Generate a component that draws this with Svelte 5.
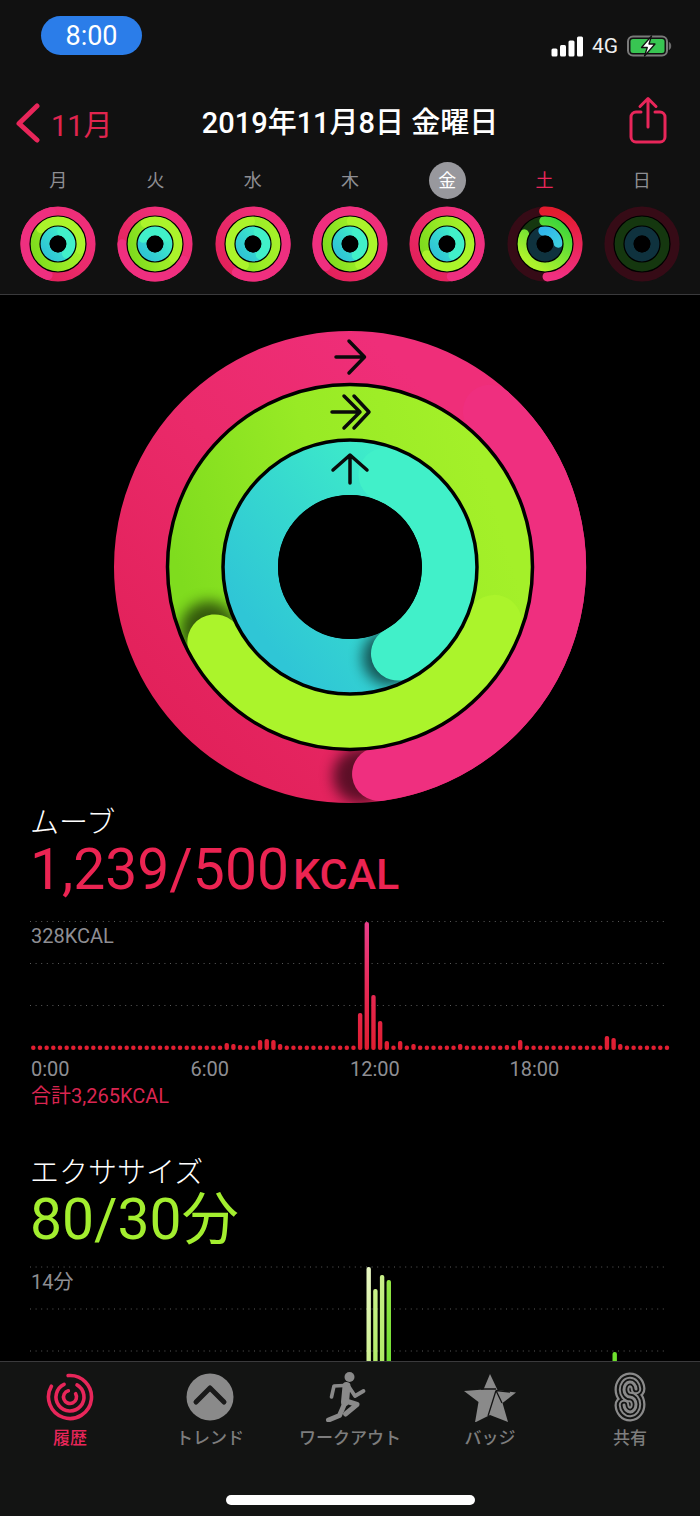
<script>
  // angles are clockwise from 12 o'clock
  function arc(r, a0, a1) {
    const rad = (a) => (a * Math.PI) / 180;
    const x0 = r * Math.sin(rad(a0));
    const y0 = -r * Math.cos(rad(a0));
    const x1 = r * Math.sin(rad(a1));
    const y1 = -r * Math.cos(rad(a1));
    const large = a1 - a0 > 180 ? 1 : 0;
    return `M${x0.toFixed(2)} ${y0.toFixed(2)}A${r} ${r} 0 ${large} 1 ${x1.toFixed(2)} ${y1.toFixed(2)}`;
  }

  function polar(r, a) {
    const t = (a * Math.PI) / 180;
    return { x: r * Math.sin(t), y: -r * Math.cos(t) };
  }

  const days = [
    { label: '月', heads: [348, 103, 138] },
    { label: '火', heads: [270, 126, 57] },
    { label: '水', heads: [210, 353, 145] },
    { label: '木', heads: [17, 154, 150] },
    { label: '金', heads: [172, 241, 151], current: true },
    { label: '土', weekend: true, partial: true },
    { label: '日', empty: true }
  ];

  const mainRings = [
    { r: 209, w: 54, inner: 182, outer: 236, head: 172, base: 'url(#baseMove)', top: '#ef2f7f', id: 'clipMove' },
    { r: 154.5, w: 55, inner: 127, outer: 182, head: 241, base: 'url(#baseExercise)', top: '#abf42b', id: 'clipExercise' },
    { r: 99, w: 54, inner: 72, outer: 126, head: 151, base: 'url(#baseStand)', top: '#41f0c9', id: 'clipStand' }
  ];

  const moveSpikes = {
    29: 7, 30: 6, 31: 5, 34: 10, 35: 11, 36: 10, 37: 6,
    49: 37, 50: 128, 51: 55, 52: 29, 53: 9, 55: 9, 57: 6,
    64: 6, 71: 5, 73: 10, 86: 14, 87: 12, 88: 6
  };
  const moveBars = Array.from({ length: 96 }, (_, k) => ({
    x: 3.3 + 6.67 * k - 2.2,
    h: moveSpikes[k] || 4.5
  }));

  const exerciseBars = [
    { x: 336.5, top: 1, fill: 'url(#exA)' },
    { x: 343.2, top: 23, fill: 'url(#exB)' },
    { x: 349.9, top: 9, fill: 'url(#exB)' },
    { x: 356.6, top: 14, fill: 'url(#exC)' },
    { x: 582.5, top: 86, fill: '#6fe02e' }
  ];

  const times = ['0:00', '6:00', '12:00', '18:00'];
</script>

{#snippet miniRing(day)}
  <svg class="mini" viewBox="-38 -38 76 76">
    <circle r="28.7" fill="#000" />
    {#if day.heads}
      <circle r="32.8" fill="none" stroke-width="9.5" stroke="url(#baseMove)" />
      <circle r="23" fill="none" stroke-width="9.8" stroke="url(#baseExercise)" />
      <circle r="13.2" fill="none" stroke-width="9.6" stroke="url(#baseStand)" />
      <path d={arc(32.8, day.heads[0] - 150, day.heads[0])} class="cap" stroke-width="9.5" stroke="#ef2f7f" />
      <path d={arc(23, day.heads[1] - 150, day.heads[1])} class="cap" stroke-width="9.8" stroke="#abf42b" />
      <path d={arc(13.2, day.heads[2] - 120, day.heads[2])} class="cap" stroke-width="9.6" stroke="#41f0c9" />
    {:else}
      <circle r="32.8" fill="none" stroke-width="9.5" stroke="#360b16" />
      <circle r="23" fill="none" stroke-width="9.8" stroke="#15370f" />
      <circle r="13.2" fill="none" stroke-width="9.6" stroke="#0f323e" />
    {/if}
    {#if day.partial}
      <path d={arc(32.8, -2, 176)} class="cap" stroke-width="9.5" stroke="url(#partMove)" />
      <path d={arc(23, -2, 295)} class="cap" stroke-width="9.8" stroke="url(#partExercise)" />
      <path d={arc(13.2, -8, 85)} class="cap" stroke-width="9.6" stroke="url(#partStand)" />
    {/if}
    <circle r="28" fill="none" stroke="#000" stroke-width="1.2" />
    <circle r="18" fill="none" stroke="#000" stroke-width="1.2" />
    <circle r="8.4" fill="#000" />
  </svg>
{/snippet}

<div class="phone">
  <svg class="defs" width="0" height="0">
    <defs>
      <linearGradient id="baseMove" x1="0.1" y1="0.9" x2="0.8" y2="0.2">
        <stop offset="0" stop-color="#e2215a" />
        <stop offset="0.55" stop-color="#ea2a6a" />
        <stop offset="1" stop-color="#ef2e79" />
      </linearGradient>
      <linearGradient id="baseExercise" x1="0" y1="0.7" x2="1" y2="0.4">
        <stop offset="0" stop-color="#7fdc1e" />
        <stop offset="0.5" stop-color="#98ea25" />
        <stop offset="1" stop-color="#a4f029" />
      </linearGradient>
      <linearGradient id="baseStand" x1="0.1" y1="0.9" x2="0.9" y2="0.25">
        <stop offset="0" stop-color="#2fc6d6" />
        <stop offset="0.5" stop-color="#36d8cf" />
        <stop offset="1" stop-color="#3eecc9" />
      </linearGradient>
      <linearGradient id="partMove" x1="0" y1="0" x2="0" y2="1">
        <stop offset="0" stop-color="#e31b2e" />
        <stop offset="1" stop-color="#f02f80" />
      </linearGradient>
      <linearGradient id="partExercise" x1="0.8" y1="0" x2="0.2" y2="0.9">
        <stop offset="0" stop-color="#3dd53b" />
        <stop offset="1" stop-color="#adf22c" />
      </linearGradient>
      <linearGradient id="partStand" x1="0" y1="0" x2="1" y2="1">
        <stop offset="0" stop-color="#31b6ec" />
        <stop offset="1" stop-color="#3ccde0" />
      </linearGradient>
      <filter id="soft" x="-50%" y="-50%" width="200%" height="200%">
        <feGaussianBlur stdDeviation="7" />
      </filter>
    </defs>
  </svg>

  <header>
    <div class="status">
      <div class="time">8:00</div>
      <div class="indicators">
        <svg class="signal" width="33" height="21" viewBox="0 0 33 21">
          <rect x="0.5" y="12.5" width="6" height="8" rx="1.5" />
          <rect x="9" y="9" width="6" height="11.5" rx="1.5" />
          <rect x="17.5" y="4.5" width="6" height="16" rx="1.5" />
          <rect x="26" y="0.5" width="6" height="20" rx="1.5" />
        </svg>
        <span class="net">4G</span>
        <svg class="battery" width="46" height="22" viewBox="0 0 46 22">
          <rect x="1" y="1.5" width="39" height="19" rx="5" fill="none" stroke="#7a7a7a" stroke-width="2" />
          <rect x="3.5" y="4" width="34" height="14" rx="2.5" fill="#38c552" />
          <path d="M41.8 7v8c1.6-.4 2.4-2 2.4-4s-.8-3.600-2.400-4z" fill="#6a6a6a" />
          <path d="M24.500 1 14.500 12.500h5.800L17.500 21l10.500-12h-6z" fill="#fff" stroke="#111" stroke-width="1.300" stroke-linejoin="round" />
        </svg>
      </div>
    </div>

    <div class="nav">
      <div class="back">
        <svg width="24" height="40" viewBox="0 0 24 40">
          <path d="M21 3 3 20.500 21 37" fill="none" stroke="#e8265a" stroke-width="5" stroke-linecap="round" stroke-linejoin="round" />
        </svg>
        <span>11月</span>
      </div>
      <h1>2019年11月8日 金曜日</h1>
      <svg class="share" width="38" height="48" viewBox="0 0 38 48">
        <path d="M12 16H7a5 5 0 0 0-5 5v20a5 5 0 0 0 5 5h24a5 5 0 0 0 5-5V21a5 5 0 0 0-5-5h-5M19 31V3M11 10.500 19 2.500l8 8" fill="none" stroke="#e8265a" stroke-width="3" stroke-linecap="round" stroke-linejoin="round" />
      </svg>
    </div>

    <div class="week">
      {#each days as day}
        <div class="day">
          <span class="label" class:current={day.current} class:weekend={day.weekend}>{day.label}</span>
          {@render miniRing(day)}
        </div>
      {/each}
    </div>
  </header>

  <main>
    <svg class="rings" width="480" height="480" viewBox="-240 -240 480 480">
      <defs>
        {#each mainRings as ring}
          <clipPath id={ring.id}>
            <path clip-rule="evenodd" d="M0 {-ring.outer}A{ring.outer} {ring.outer} 0 1 1 0 {ring.outer}A{ring.outer} {ring.outer} 0 1 1 0 {-ring.outer}ZM0 {-ring.inner}A{ring.inner} {ring.inner} 0 1 1 0 {ring.inner}A{ring.inner} {ring.inner} 0 1 1 0 {-ring.inner}Z" />
          </clipPath>
        {/each}
      </defs>
      {#each mainRings as ring}
        {@const shade = polar(ring.r, ring.head + 5)}
        <circle r={ring.r} fill="none" stroke-width={ring.w} stroke={ring.base} />
        <g clip-path="url(#{ring.id})">
          <circle cx={shade.x} cy={shade.y} r={ring.w / 2 + 1} fill="#000" opacity="0.6" filter="url(#soft)" />
        </g>
        <path d={arc(ring.r, ring.head - 130, ring.head)} class="cap" stroke-width={ring.w} stroke={ring.top} />
      {/each}
      <circle r="182.500" fill="none" stroke="#000" stroke-width="3.500" />
      <circle r="127" fill="none" stroke="#000" stroke-width="3.500" />
      <circle r="72" fill="#000" />

      <g fill="none" stroke="#0a0a0a" stroke-width="3.500" stroke-linecap="round" stroke-linejoin="round">
        <path d="M-14 -210H14M-1 -226 14.500 -210 -1 -194" />
        <path d="M-18 -155H9M-6 -171 10 -155 -6 -139M4 -171 19 -155 4 -139" />
        <path d="M0 -84V-111M-17 -97 0 -112 17 -97" />
      </g>
    </svg>

    <section class="stat move">
      <h2>ムーブ</h2>
      <p class="value">1,239/500<small>KCAL</small></p>
      <div class="chart">
        <svg width="640" height="131" viewBox="0 0 640 131">
          <defs>
            <linearGradient id="moveBar" gradientUnits="userSpaceOnUse" x1="0" y1="0" x2="0" y2="130">
              <stop offset="0" stop-color="#e93f8c" />
              <stop offset="0.5" stop-color="#e72a58" />
              <stop offset="1" stop-color="#e01e30" />
            </linearGradient>
          </defs>
          {#each [1.5, 43.5, 85.5] as y}
            <line class="grid" x1="0" x2="638" y1={y} y2={y} />
          {/each}
          {#each moveBars as bar}
            <rect x={bar.x} y={130 - bar.h} width="4.400" height={bar.h} rx="2" fill="url(#moveBar)" />
          {/each}
        </svg>
        <span class="peak">328KCAL</span>
      </div>
      <div class="times">
        {#each times as t}
          <span>{t}</span>
        {/each}
      </div>
      <p class="total">合計3,265KCAL</p>
    </section>

    <section class="stat exercise">
      <h2>エクササイズ</h2>
      <p class="value">80/30分</p>
      <div class="chart">
        <svg width="640" height="131" viewBox="0 0 640 131">
          <defs>
            <linearGradient id="exA" x1="0" y1="0" x2="0" y2="1">
              <stop offset="0" stop-color="#e8f7c4" />
              <stop offset="1" stop-color="#c4ee7c" />
            </linearGradient>
            <linearGradient id="exB" x1="0" y1="0" x2="0" y2="1">
              <stop offset="0" stop-color="#c9f08a" />
              <stop offset="1" stop-color="#a6e858" />
            </linearGradient>
            <linearGradient id="exC" x1="0" y1="0" x2="0" y2="1">
              <stop offset="0" stop-color="#93e645" />
              <stop offset="1" stop-color="#63dc2c" />
            </linearGradient>
          </defs>
          {#each [1, 43, 85] as y}
            <line class="grid" x1="0" x2="638" y1={y} y2={y} />
          {/each}
          {#each exerciseBars as bar}
            <rect x={bar.x} y={bar.top} width="4.400" height={131 - bar.top} rx="2" fill={bar.fill} />
          {/each}
        </svg>
        <span class="peak">14分</span>
      </div>
    </section>
  </main>

  <nav>
    <div class="tabs">
      <div class="tab active">
        <svg width="50" height="50" viewBox="-25 -25 50 50" fill="none" stroke="#e8265a" stroke-width="3.600" stroke-linecap="round">
          <path d={arc(21.500, -5, 300)} />
          <path d={arc(14, 30, 335)} />
          <path d={arc(6.500, 60, 345)} />
        </svg>
        <span>履歴</span>
      </div>
      <div class="tab">
        <svg width="50" height="50" viewBox="-25 -25 50 50">
          <circle r="23.500" fill="#8a8a8a" />
          <path d="M-14 5 0 -9 14 5" fill="none" stroke="#1a1a1a" stroke-width="5" stroke-linecap="round" stroke-linejoin="round" />
        </svg>
        <span>トレンド</span>
      </div>
      <div class="tab">
        <svg width="50" height="50" viewBox="0 0 50 50" fill="none" stroke="#8a8a8a" stroke-linecap="round" stroke-linejoin="round">
          <circle cx="24.500" cy="5" r="5" fill="#8a8a8a" stroke="none" />
          <path d="M21.500 14 20 30" stroke-width="8" />
          <path d="M19 13.500 9 14 6.500 25" stroke-width="3.600" />
          <path d="M24 15 30 24 38.500 19" stroke-width="3.800" />
          <path d="M21 29 32 32.500 20.500 42" stroke-width="5" />
          <path d="M19.500 32 14.500 43.500 3.500 48" stroke-width="5" />
        </svg>
        <span>ワークアウト</span>
      </div>
      <div class="tab">
        <svg width="52" height="50" viewBox="0 0 52 50">
          <path d="M26 2 33.500 18 52 20.500 38.500 31 44 50 26 43 11 50.500 14.500 30 0 19 19.500 17.500z" fill="#8a8a8a" />
          <path d="M17 17H32M32 18.500 46 20M32 18.500 38 31M32 18.500 24 44" fill="none" stroke="#141414" stroke-width="1.300" />
        </svg>
        <span>バッジ</span>
      </div>
      <div class="tab">
        <svg width="34" height="50" viewBox="-17 -25 34 50" fill="none" stroke-linecap="round">
          <path class="s" d="M6 -8A6 7.500 0 1 0 0 0A6 7.500 0 1 1 -6 8" stroke="#8a8a8a" stroke-width="19" />
          <path class="s" d="M6 -8A6 7.500 0 1 0 0 0A6 7.500 0 1 1 -6 8" stroke="#131413" stroke-width="14.500" />
          <path class="s" d="M6 -8A6 7.500 0 1 0 0 0A6 7.500 0 1 1 -6 8" stroke="#8a8a8a" stroke-width="10.500" />
          <path class="s" d="M6 -8A6 7.500 0 1 0 0 0A6 7.500 0 1 1 -6 8" stroke="#131413" stroke-width="6.500" />
          <path class="s" d="M6 -8A6 7.500 0 1 0 0 0A6 7.500 0 1 1 -6 8" stroke="#8a8a8a" stroke-width="3" />
        </svg>
        <span>共有</span>
      </div>
    </div>
    <div class="home"></div>
  </nav>
</div>

<style>
  :global(body) {
    background: #000;
  }

  .phone {
    width: 700px;
    height: 1516px;
    display: flex;
    flex-direction: column;
    overflow: hidden;
    background: #000;
    color: #fff;
    font-family: Roboto, "Noto Sans CJK JP", sans-serif;
  }

  .defs {
    position: absolute;
  }

  header {
    height: 295px;
    box-sizing: border-box;
    flex: none;
    background: #111;
    border-bottom: 1px solid #3a3a3c;
  }

  .status {
    display: flex;
    justify-content: space-between;
    align-items: flex-end;
    padding: 16px 27px 0 41px;
  }

  .time {
    width: 101px;
    height: 39px;
    border-radius: 20px;
    background: #2b7de9;
    font-size: 27px;
    line-height: 40px;
    text-align: center;
  }

  .indicators {
    display: flex;
    align-items: center;
    height: 22px;
    margin-bottom: -2px;
  }

  .signal {
    fill: #fff;
  }

  .net {
    margin: 0 9px 0 8px;
    font-size: 21px;
    line-height: 22px;
    color: #eee;
  }

  .nav {
    display: flex;
    align-items: center;
    justify-content: space-between;
    height: 50px;
    margin-top: 43px;
    padding: 0 33px 0 16px;
    position: relative;
  }

  .back {
    display: flex;
    align-items: center;
    gap: 11px;
    font-size: 29px;
    color: #e0254f;
  }

  h1 {
    position: absolute;
    left: 0;
    right: 0;
    margin: 0;
    text-align: center;
    font-size: 29px;
    font-weight: 500;
    line-height: 40px;
  }

  .share {
    margin-top: -6px;
  }

  .week {
    display: grid;
    grid-template-columns: repeat(7, 1fr);
    padding: 0 9.500px;
    margin-top: 14px;
  }

  .day {
    display: flex;
    flex-direction: column;
    align-items: center;
    gap: 7px;
  }

  .label {
    width: 37px;
    height: 37px;
    border-radius: 50%;
    font-size: 18px;
    line-height: 37px;
    text-align: center;
    color: #8e8e93;
  }

  .label.current {
    background: #98989d;
    color: #fff;
  }

  .label.weekend {
    color: #e8265a;
  }

  .mini {
    width: 76px;
    height: 76px;
  }

  .cap {
    fill: none;
    stroke-linecap: round;
  }

  main {
    flex: 1;
    min-height: 0;
    overflow: hidden;
  }

  .rings {
    display: block;
    margin: 32px auto 0;
  }

  .stat {
    padding-left: 30px;
  }

  h2 {
    margin: 0;
    font-size: 29px;
    font-weight: 300;
    line-height: 36px;
  }

  .value {
    margin: 0;
    font-size: 57px;
    line-height: 58px;
  }

  .move {
    margin-top: -2px;
  }

  .move .value {
    color: #eb2452;
  }

  .value small {
    font-size: 43px;
    font-weight: 500;
    margin-left: 4px;
  }

  .exercise {
    margin-top: 46px;
  }

  .exercise .value {
    color: #a3ee2f;
  }

  .chart {
    position: relative;
    height: 131px;
    margin-top: 17px;
  }

  .chart svg {
    display: block;
  }

  .grid {
    stroke: #5a5a5a;
    stroke-width: 1;
    stroke-dasharray: 1 4.600;
  }

  .peak {
    position: absolute;
    left: 1px;
    top: 4px;
    font-size: 20px;
    line-height: 24px;
    color: #8e8e93;
  }

  .times {
    display: grid;
    grid-template-columns: repeat(4, 159.500px);
    padding-left: 1px;
    margin-top: 5px;
    font-size: 20px;
    line-height: 26px;
    color: #8e8e93;
  }

  .total {
    margin: 1px 0 0 1px;
    font-size: 20px;
    line-height: 26px;
    color: #d92550;
  }

  nav {
    flex: none;
    height: 155px;
    box-sizing: border-box;
    background: #131413;
    border-top: 1px solid #3a3a3c;
  }

  .tabs {
    display: grid;
    grid-template-columns: repeat(5, 140px);
    padding-top: 10px;
  }

  .tab {
    display: flex;
    flex-direction: column;
    align-items: center;
    gap: 4px;
    font-size: 17px;
    font-weight: 500;
    line-height: 24px;
    color: #7d7d7d;
  }

  .tab.active {
    color: #e8265a;
  }

  .home {
    width: 249px;
    height: 10px;
    margin: 45px auto 0;
    border-radius: 5px;
    background: #fff;
  }
</style>
